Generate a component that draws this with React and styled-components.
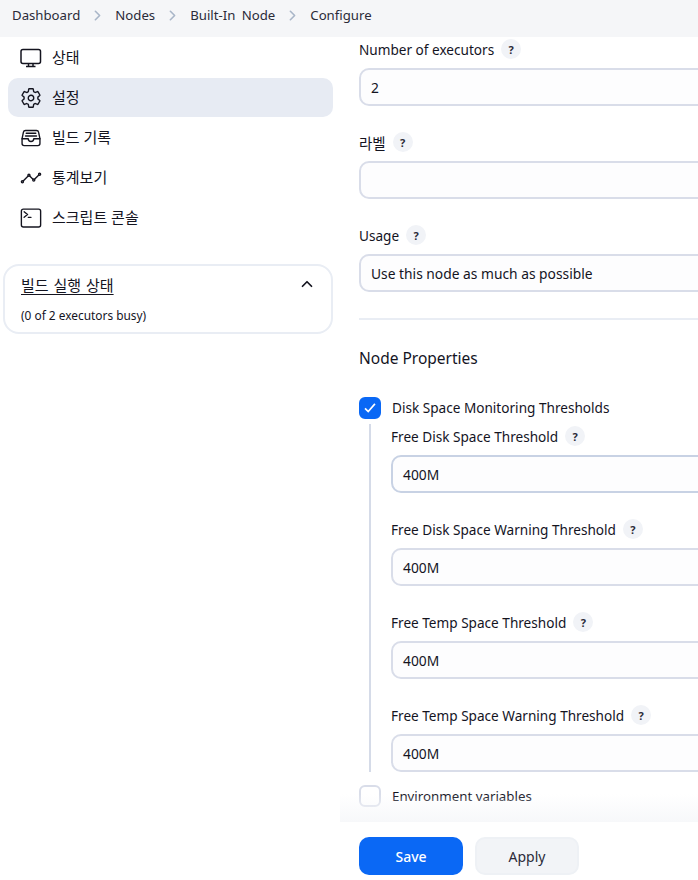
import React from "react";
import styled, { createGlobalStyle } from "styled-components";
import {
	IoSettingsOutline,
	IoFileTrayFullOutline,
	IoAnalyticsOutline,
	IoTerminalOutline,
	IoChevronUp,
	IoChevronForward,
	IoCheckmarkSharp,
} from "react-icons/io5";

const DesktopIcon = () => (
	<svg width="22" height="22" viewBox="0 0 22 22" fill="none" stroke="currentColor">
		<rect x="1" y="2.5" width="19.5" height="14" rx="2" strokeWidth="1.5" />
		<path d="M8.5 17v2M13 17v2" strokeWidth="1.5" />
		<path d="M6 19.5h9.5" strokeWidth="1.5" />
	</svg>
);

const crumbs = ["Dashboard", "Nodes", "Built-In Node", "Configure"];

const tasks = [
	{ label: "상태", Icon: DesktopIcon },
	{ label: "설정", Icon: IoSettingsOutline, active: true },
	{ label: "빌드 기록", Icon: IoFileTrayFullOutline },
	{ label: "통계보기", Icon: IoAnalyticsOutline },
	{ label: "스크립트 콘솔", Icon: IoTerminalOutline },
];

const thresholds = [
	"Free Disk Space Threshold",
	"Free Disk Space Warning Threshold",
	"Free Temp Space Threshold",
	"Free Temp Space Warning Threshold",
];

const Field = ({ label, value, korean, hovered }) => (
	<FieldBox>
		<LabelRow $korean={korean}>
			<span>{label}</span>
			<Help>?</Help>
		</LabelRow>
		<Input $hovered={hovered}>{value}</Input>
	</FieldBox>
);

const App = () => {
	return (
		<Page>
			<GlobalStyle />
			<Breadcrumbs>
				{crumbs.map((crumb, i) => (
					<React.Fragment key={crumb}>
						{i > 0 && <Separator />}
						<span>{crumb}</span>
					</React.Fragment>
				))}
			</Breadcrumbs>
			<Layout>
				<Sidebar>
					<Tasks>
						{tasks.map(({ label, Icon, active }) => (
							<Task key={label} $active={active}>
								<Icon size={22} />
								<span>{label}</span>
							</Task>
						))}
					</Tasks>
					<Card>
						<CardHead>
							<CardTitle>빌드 실행 상태</CardTitle>
							<Collapse size={16} />
						</CardHead>
						<CardText>(0 of 2 executors busy)</CardText>
					</Card>
				</Sidebar>
				<Main>
					<Form>
						<Field label="Number of executors" value="2" />
						<Field label="라벨" value="" korean />
						<Field label="Usage" value="Use this node as much as possible" />
						<Divider />
						<Heading>Node Properties</Heading>
						<CheckRow>
							<Checkbox $checked>
								<IoCheckmarkSharp size={14} />
							</Checkbox>
							<span>Disk Space Monitoring Thresholds</span>
						</CheckRow>
						<Nested>
							{thresholds.map((label, i) => (
								<Field key={label} label={label} value="400M" hovered={i === 0} />
							))}
						</Nested>
						<EnvRow>
							<Checkbox />
							<span>Environment variables</span>
						</EnvRow>
					</Form>
					<Fade />
					<BottomBar>
						<SaveButton>Save</SaveButton>
						<ApplyButton>Apply</ApplyButton>
					</BottomBar>
				</Main>
			</Layout>
		</Page>
	);
};

export default App;

const GlobalStyle = createGlobalStyle`
	html, body {
		margin: 0;
		padding: 0;
		background: #fff;
	}

	body {
		font-family: "Noto Sans", "Noto Sans CJK KR", sans-serif;
		font-size: 13.6px;
		color: #14141f;
	}
`;

const Page = styled.div`
	width: 698px;
	height: 880px;
	overflow: hidden;
`;

const Breadcrumbs = styled.nav`
	display: flex;
	align-items: center;
	height: 37px;
	padding: 0 12px 7px;
	box-sizing: border-box;
	background: #f5f6f8;
	font-size: 13.2px;
	word-spacing: 3px;
	color: #2b2b38;
`;

const Separator = styled(IoChevronForward)`
	width: 15px;
	height: 15px;
	margin: 0 10px;
	color: #a9b6c8;

	path {
		stroke-width: 56;
	}
`;

const Layout = styled.div`
	display: grid;
	grid-template-columns: 340px 1fr;
`;

const Sidebar = styled.aside`
	display: flex;
	flex-direction: column;
	gap: 26px;
	padding: 0 7px 0 3px;
	box-sizing: border-box;
`;

const Tasks = styled.div`
	display: flex;
	flex-direction: column;
	margin-top: 1px;
	padding-left: 5px;
`;

const Task = styled.div`
	display: flex;
	align-items: center;
	gap: 10px;
	height: 39px;
	margin-bottom: 1px;
	padding-left: 12px;
	border-radius: 10px;
	background: ${(p) => (p.$active ? "#e7ebf3" : "transparent")};
	font-size: 15px;
	color: #14141f;

	svg {
		flex: none;
	}

	span {
		padding-bottom: 3px;
	}
`;

const Card = styled.section`
	height: 70px;
	padding: 6px 16px 0 16px;
	box-sizing: border-box;
	border: 2px solid #e9edf4;
	border-radius: 16px;
`;

const CardHead = styled.div`
	display: flex;
	align-items: center;
	justify-content: space-between;
	height: 24px;
`;

const CardTitle = styled.span`
	font-size: 15px;
	word-spacing: 1px;
	text-decoration: underline;
	text-underline-offset: 3px;
`;

const Collapse = styled(IoChevronUp)`
	path {
		stroke-width: 56;
	}
`;

const CardText = styled.div`
	margin-top: 11px;
	font-size: 11.9px;
	line-height: 16px;
`;

const Main = styled.main`
	display: flex;
	flex-direction: column;
	min-width: 0;
`;

const Form = styled.div`
	display: flex;
	flex-direction: column;
	padding-left: 19px;
	width: 500px;
`;

const FieldBox = styled.div`
	display: flex;
	flex: none;
	flex-direction: column;
	height: 93px;

	&:last-child {
		height: 69px;
	}
`;

const LabelRow = styled.div`
	display: flex;
	align-items: center;
	gap: 7px;
	height: 24px;
	margin-bottom: 7px;
	font-size: ${(p) => (p.$korean ? "14.5px" : "13.6px")};
`;

const Help = styled.span`
	display: flex;
	align-items: center;
	justify-content: center;
	width: 20px;
	height: 20px;
	border-radius: 50%;
	background: #f1f3f7;
	font-size: 11px;
	font-weight: 700;
	color: #2b2b38;
`;

const Input = styled.div`
	height: 38px;
	padding: 0 10px;
	box-sizing: border-box;
	border: 2px solid ${(p) => (p.$hovered ? "#c8d2e4" : "#d9dde9")};
	border-radius: 10px;
	background: #fdfdfe;
	font-size: 13.8px;
	line-height: 36px;
`;

const Divider = styled.hr`
	width: 100%;
	height: 2px;
	margin: 2px 0 26px;
	border: none;
	background: #e9edf4;
`;

const Heading = styled.h2`
	margin: 0 0 26px;
	font-size: 15.5px;
	line-height: 24px;
	font-weight: 400;
`;

const CheckRow = styled.label`
	display: flex;
	align-items: center;
	gap: 11px;
	height: 23px;
`;

const EnvRow = styled(CheckRow)`
	margin-top: 12px;
	font-size: 13.3px;
`;

const Checkbox = styled.span`
	display: flex;
	align-items: center;
	justify-content: center;
	flex: none;
	width: 22px;
	height: 22px;
	box-sizing: border-box;
	border-radius: 6px;
	border: 2px solid ${(p) => (p.$checked ? "#0a68f5" : "#d9dde9")};
	background: ${(p) => (p.$checked ? "#0a68f5" : "#fff")};
	color: #fff;

	svg * {
		stroke-width: 64;
	}
`;

const Nested = styled.div`
	display: flex;
	flex-direction: column;
	margin: 5px 0 0 10px;
	padding-left: 20px;
	border-left: 2px solid #d5dbe8;
`;

const Fade = styled.div`
	position: relative;
	height: 28px;
	margin-top: -13px;
	background: linear-gradient(to bottom, rgba(245, 246, 248, 0), #f7f8fa);
`;

const BottomBar = styled.div`
	display: flex;
	gap: 12px;
	padding: 15px 0 0 19px;
`;

const SaveButton = styled.button`
	width: 104px;
	height: 38px;
	border: none;
	border-radius: 10px;
	background: #0a68f5;
	color: #fff;
	font-family: inherit;
	font-size: 14px;
	font-weight: 500;
`;

const ApplyButton = styled(SaveButton)`
	border: 2px solid #eef1f5;
	background: #f2f4f7;
	color: #2b2b38;
	font-weight: 400;
`;
